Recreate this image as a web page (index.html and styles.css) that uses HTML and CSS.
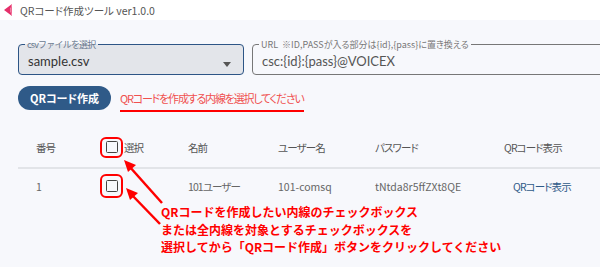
FILE: index.html
```html
<!DOCTYPE html>
<html lang="ja">
<head>
<meta charset="utf-8">
<link rel="stylesheet" href="styles.css">
</head>
<body>
<header class="titlebar">
  <svg class="app-icon" width="10" height="12" viewBox="0 0 10 12"><polygon points="8,0 0,6 8,12 6,6" fill="#e5306a"/><polygon points="8,0 6,6 8,12" fill="#f06a94"/></svg>
  <span class="title">QRコード作成ツール ver1.0.0</span>
</header>
<main class="page">
  <div class="fields">
    <fieldset class="field field-select">
      <legend>csvファイルを選択</legend>
      <div class="field-value">sample.csv</div>
      <svg class="caret" width="8" height="5" viewBox="0 0 8 5"><polygon points="0,0 8,0 4,5" fill="#555"/></svg>
    </fieldset>
    <fieldset class="field field-url">
      <legend>URL &nbsp;※ID,PASSが入る部分は{id},{pass}に置き換える</legend>
      <div class="field-value">csc:{id}:{pass}@VOICEX</div>
    </fieldset>
  </div>
  <div class="actions">
    <button class="btn-primary">QRコード作成</button>
    <span class="hint">QRコードを作成する内線を選択してください</span>
  </div>
  <div class="table">
    <div class="row head">
      <div class="cell c-no ja">番号</div>
      <div class="cell c-sel ja"><span class="mark"><span class="checkbox"></span></span><span>選択</span></div>
      <div class="cell ja">名前</div>
      <div class="cell ja">ユーザー名</div>
      <div class="cell ja">パスワード</div>
      <div class="cell c-qr ja">QRコード表示</div>
    </div>
    <div class="row body">
      <div class="cell c-no">1</div>
      <div class="cell c-sel"><span class="mark tall"><span class="checkbox"></span></span></div>
      <div class="cell ja">101ユーザー</div>
      <div class="cell">101-comsq</div>
      <div class="cell">tNtda8r5ffZXt8QE</div>
      <div class="cell c-qr ja"><a class="link">QRコード表示</a></div>
    </div>
  </div>
</main>
<svg class="arrows" width="600" height="267" viewBox="0 0 600 267">
  <line x1="162" y1="203" x2="129" y2="166" stroke="#ff0000" stroke-width="2.5"/>
  <polygon points="124,160 136,165 128,172" fill="#ff0000"/>
  <line x1="160" y1="224" x2="131" y2="194" stroke="#ff0000" stroke-width="2.5"/>
  <polygon points="126,188 138,193 130,200" fill="#ff0000"/>
</svg>
<div class="note">QRコードを作成したい内線のチェックボックス<br>または全内線を対象とするチェックボックスを<br>選択してから「QRコード作成」ボタンをクリックしてください</div>
</body>
</html>
```
FILE: styles.css
```css
html, body {
  margin: 0;
  padding: 0;
}
body {
  width: 600px;
  height: 267px;
  overflow: hidden;
  position: relative;
  background: #f7f8fc;
  font-family: "Noto Sans CJK JP", "Noto Sans", sans-serif;
  font-feature-settings: "palt";
  color: #555;
}
.titlebar {
  height: 20px;
  background: #fff;
  display: flex;
  align-items: center;
  padding-left: 4px;
  gap: 6px;
}
.title {
  font-size: 10.5px;
  color: #555;
}
.page {
  padding: 20px 0 0 18px;
}
.fields {
  display: flex;
  gap: 8px;
  margin-right: -12px;
}
.field {
  margin: 0;
  height: 35px;
  box-sizing: border-box;
  border-radius: 4px;
  padding: 0 9px;
  position: relative;
  display: flex;
  align-items: center;
}
.field legend {
  font-size: 9px;
  line-height: 9px;
  padding: 0 2px;
  margin-left: -3px;
  color: #777;
}
.field-select {
  width: 226px;
  border: 1.5px solid #2d5586;
  background: #e3e5ea;
}
.field-select legend {
  color: #6a7a8f;
  font-feature-settings: normal;
  letter-spacing: -0.8px;
}
.field-url {
  flex: 1;
  border: 1px solid #777;
}
.field-value {
  font-family: "Lato", "Noto Sans", sans-serif;
  font-size: 13px;
  color: #333;
  margin-top: -2px;
}
.field-url .field-value { color: #555; }
.caret {
  position: absolute;
  right: 12px;
  top: 13px;
}
.actions {
  display: flex;
  align-items: flex-start;
  gap: 9px;
  margin-top: 11px;
  height: 24px;
}
.btn-primary {
  width: 93px;
  height: 24px;
  border: none;
  border-radius: 12px;
  background: #2f5a88;
  color: #fff;
  font-family: inherit;
  font-feature-settings: "palt";
  font-weight: 700;
  font-size: 11px;
  padding: 0;
}
.hint {
  font-size: 11px;
  line-height: 14px;
  letter-spacing: -1.2px;
  color: #f0504f;
  border-bottom: 2px solid #ff0000;
  padding: 0 0 5px;
  margin-top: 5px;
}
.table {
  margin-top: 17px;
}
.row {
  display: grid;
  grid-template-columns: 82px 88px 90px 97px 127px 98px;
  align-items: center;
  font-size: 10.5px;
}
.row.head {
  height: 40px;
  color: #555;
  border-bottom: 2px solid #e2e4e8;
}
.row.body {
  height: 34px;
  color: #666;
}
.ja { letter-spacing: -0.9px; }
.c-no { padding-left: 18px; }
.c-sel {
  display: flex;
  align-items: center;
  gap: 1px;
}
.mark {
  width: 23px;
  height: 21px;
  box-sizing: border-box;
  border: 2px solid #ff0000;
  border-radius: 6px;
  display: flex;
  align-items: center;
  justify-content: center;
}
.mark.tall { height: 24px; }
.checkbox {
  width: 12px;
  height: 12px;
  box-sizing: border-box;
  border: 1.5px solid #444;
  border-radius: 1.5px;
}
.c-qr { padding-left: 2px; }
.link {
  color: #2f5a88;
  padding-left: 9px;
}
.arrows {
  position: absolute;
  left: 0;
  top: 0;
}
.note {
  position: absolute;
  left: 161px;
  top: 203px;
  font-size: 12px;
  line-height: 17.5px;
  font-weight: 700;
  font-feature-settings: normal;
  color: #ff0000;
}
```
